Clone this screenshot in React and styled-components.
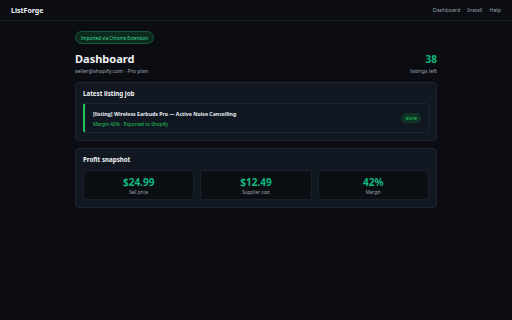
import React from 'react';
import styled, { createGlobalStyle } from 'styled-components';

const GlobalStyle = createGlobalStyle`
  html, body {
    margin: 0;
    padding: 0;
    background: #0b0d12;
    font-family: "Noto Sans", "Open Sans", sans-serif;
    color: #e6edf3;
  }
  * { box-sizing: border-box; }
`;

const Page = styled.div`
  min-height: 320px;
  background: #0b0d12;
`;

const Header = styled.header`
  height: 21px;
  display: flex;
  align-items: center;
  justify-content: space-between;
  padding: 0 11px;
  border-bottom: 1px solid #1a2029;
`;

const Brand = styled.div`
  font-size: 7px;
  font-weight: 700;
  color: #f0f3f6;
`;

const Nav = styled.nav`
  display: flex;
  gap: 7px;
`;

const NavLink = styled.a`
  font-size: 5.3px;
  color: #9aa4b2;
  text-decoration: none;
`;

const Main = styled.main`
  width: 362px;
  margin: 0 auto;
  padding-top: 10px;
  display: flex;
  flex-direction: column;
`;

const Badge = styled.span`
  align-self: flex-start;
  display: inline-flex;
  align-items: center;
  height: 13px;
  padding: 0 5px;
  border-radius: 7px;
  background: #0c2a1e;
  border: 1px solid #17563a;
  color: #3ddc97;
  font-size: 4.5px;
`;

const TitleRow = styled.div`
  display: flex;
  justify-content: space-between;
  align-items: flex-end;
  margin-top: 7px;
`;

const Title = styled.h1`
  margin: 0;
  font-size: 11px;
  line-height: 15px;
  font-weight: 700;
  color: #f0f3f6;
`;

const Sub = styled.div`
  font-size: 5.3px;
  color: #9aa4b2;
  margin-top: 1px;
`;

const Quota = styled.div`
  text-align: right;
`;

const QuotaNum = styled.div`
  font-size: 10px;
  line-height: 13px;
  font-weight: 700;
  color: #10b981;
`;

const Card = styled.section`
  margin-top: ${p => p.$mt}px;
  background: #121821;
  border: 1px solid #1d2430;
  border-radius: 4px;
  padding: 7px 7px 7px;
`;

const CardTitle = styled.h2`
  margin: 0 0 ${p => p.$gap}px;
  font-size: 6.2px;
  line-height: 8px;
  font-weight: 700;
  color: #f0f3f6;
`;

const JobRow = styled.div`
  display: flex;
  align-items: center;
  justify-content: space-between;
  height: 30px;
  padding: 0 7px 0 8px;
  background: #111720;
  border: 1px solid #1d2430;
  border-left: 2px solid #22c55e;
  border-radius: 3px;
`;

const JobTitle = styled.div`
  font-size: 5.2px;
  font-weight: 700;
  color: #e6edf3;
`;

const JobMeta = styled.div`
  font-size: 4.8px;
  color: #22c55e;
  margin-top: 3px;
`;

const Pill = styled.span`
  font-size: 4.8px;
  color: #22c55e;
  background: #0f3324;
  border-radius: 5px;
  padding: 2px 4px;
`;

const StatGrid = styled.div`
  display: grid;
  grid-template-columns: repeat(3, 1fr);
  gap: 6px;
`;

const Stat = styled.div`
  height: 30px;
  background: #0b0f14;
  border: 1px solid #1a212b;
  border-radius: 3px;
  display: flex;
  flex-direction: column;
  align-items: center;
  justify-content: center;
`;

const StatValue = styled.div`
  font-size: 10px;
  line-height: 12px;
  font-weight: 700;
  color: #10b981;
`;

const StatLabel = styled.div`
  font-size: 4.5px;
  color: #9aa4b2;
  margin-top: 1px;
`;

const stats = [
  { value: '$24.99', label: 'Sell price' },
  { value: '$12.49', label: 'Supplier cost' },
  { value: '42%', label: 'Margin' },
];

export default function App() {
  return (
    <Page>
      <GlobalStyle />
      <Header>
        <Brand>ListForge</Brand>
        <Nav>
          <NavLink>Dashboard</NavLink>
          <NavLink>Install</NavLink>
          <NavLink>Help</NavLink>
        </Nav>
      </Header>
      <Main>
        <Badge>Imported via Chrome Extension</Badge>
        <TitleRow>
          <div>
            <Title>Dashboard</Title>
            <Sub>seller@shopify.com · Pro plan</Sub>
          </div>
          <Quota>
            <QuotaNum>38</QuotaNum>
            <Sub>listings left</Sub>
          </Quota>
        </TitleRow>
        <Card $mt={7}>
          <CardTitle $gap={5}>Latest listing job</CardTitle>
          <JobRow>
            <div>
              <JobTitle>[listing] Wireless Earbuds Pro — Active Noise Cancelling</JobTitle>
              <JobMeta>Margin 42% · Exported to Shopify</JobMeta>
            </div>
            <Pill>done</Pill>
          </JobRow>
        </Card>
        <Card $mt={7}>
          <CardTitle $gap={6}>Profit snapshot</CardTitle>
          <StatGrid>
            {stats.map(s => (
              <Stat key={s.label}>
                <StatValue>{s.value}</StatValue>
                <StatLabel>{s.label}</StatLabel>
              </Stat>
            ))}
          </StatGrid>
        </Card>
      </Main>
    </Page>
  );
}
